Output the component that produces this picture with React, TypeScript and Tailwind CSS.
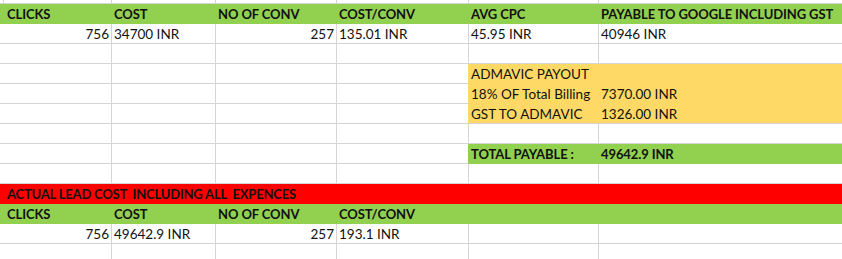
import React from "react";

type CellProps = {
  children?: React.ReactNode;
  right?: boolean;
  bold?: boolean;
  className?: string;
};

const Cell = ({ children, right, bold, className = "" }: CellProps) => (
  <div
    className={`h-5 border-b border-r whitespace-nowrap overflow-visible px-[2px] leading-[20px] text-[#111] ${right ? "text-right" : "text-left"} ${bold ? "text-[13px] font-bold tracking-[-0.1px]" : "text-[13.5px]"} ${className}`}
  >
    {children}
  </div>
);

const cols = "grid grid-cols-[4px_108px_104px_121px_132px_130px_1fr]";
const plain = "border-[#d4d4d4] bg-white";
const green = "border-[#92d050] bg-[#92d050]";
const yellow = "border-[#ffd966] bg-[#ffd966]";

const EmptyRow = () => (
  <div className={cols}>
    <Cell className={plain} />
    <Cell className={plain} />
    <Cell className={plain} />
    <Cell className={plain} />
    <Cell className={plain} />
    <Cell className={plain} />
    <Cell className={`${plain} border-r-0`} />
  </div>
);

const HeaderRow = ({ labels }: { labels: string[] }) => (
  <div className={cols}>
    <Cell className={green} />
    {labels.map((l, i) => (
      <Cell key={i} bold className={`${green} ${i === 0 ? "pl-[3px]" : ""} ${i === 5 ? "border-r-0" : ""}`}>
        {l}
      </Cell>
    ))}
  </div>
);

export default function App() {
  return (
    <div
      className="w-[842px] h-[259px] overflow-hidden bg-white"
      style={{ fontFamily: "Lato, 'Open Sans', sans-serif" }}
    >
      <div className={cols}>
        <div className="h-1 border-b border-r border-[#d4d4d4]" />
        <div className="h-1 border-b border-r border-[#d4d4d4]" />
        <div className="h-1 border-b border-r border-[#d4d4d4]" />
        <div className="h-1 border-b border-r border-[#d4d4d4]" />
        <div className="h-1 border-b border-r border-[#d4d4d4]" />
        <div className="h-1 border-b border-r border-[#d4d4d4]" />
        <div className="h-1 border-b border-[#d4d4d4]" />
      </div>
      <HeaderRow
        labels={["CLICKS", "COST", "NO OF CONV", "COST/CONV", "AVG CPC", "PAYABLE TO GOOGLE INCLUDING GST"]}
      />
      <div className={cols}>
        <Cell className={plain} />
        <Cell right className={plain}>756</Cell>
        <Cell className={plain}>34700 INR</Cell>
        <Cell right className={plain}>257</Cell>
        <Cell className={plain}>135.01 INR</Cell>
        <Cell className={plain}>45.95 INR</Cell>
        <Cell className={`${plain} border-r-0`}>40946 INR</Cell>
      </div>
      <EmptyRow />
      {[
        ["ADMAVIC PAYOUT", ""],
        ["18% OF Total Billing", "7370.00 INR"],
        ["GST TO ADMAVIC", "1326.00 INR"],
      ].map(([a, b], i) => (
        <div key={i} className={cols}>
          <Cell className={plain} />
          <Cell className={plain} />
          <Cell className={plain} />
          <Cell className={plain} />
          <Cell className={`${plain} border-r-[#ffd966]`} />
          <Cell className={`${yellow} ${i === 2 ? "border-b-[#d4d4d4]" : ""}`}>{a}</Cell>
          <Cell className={`${yellow} border-r-0 ${i === 2 ? "border-b-[#d4d4d4]" : ""}`}>{b}</Cell>
        </div>
      ))}
      <EmptyRow />
      <div className={cols}>
        <Cell className={plain} />
        <Cell className={plain} />
        <Cell className={plain} />
        <Cell className={plain} />
        <Cell className={`${plain} border-r-[#92d050]`} />
        <Cell bold className={green}>TOTAL PAYABLE :</Cell>
        <Cell bold className={`${green} border-r-0`}>49642.9 INR</Cell>
      </div>
      <EmptyRow />
      <div className="h-5 border-b border-[#ff0000] bg-[#ff0000] pl-[7px] text-[13px] leading-[20px] font-bold tracking-[-0.2px] text-[#111] whitespace-pre">
        {"ACTUAL LEAD COST  INCLUDING ALL  EXPENCES"}
      </div>
      <HeaderRow labels={["CLICKS", "COST", "NO OF CONV", "COST/CONV", "", ""]} />
      <div className={cols}>
        <Cell className={plain} />
        <Cell right className={plain}>756</Cell>
        <Cell className={plain}>49642.9 INR</Cell>
        <Cell right className={plain}>257</Cell>
        <Cell className={plain}>193.1 INR</Cell>
        <Cell className={plain} />
        <Cell className={`${plain} border-r-0`} />
      </div>
      <EmptyRow />
    </div>
  );
}
